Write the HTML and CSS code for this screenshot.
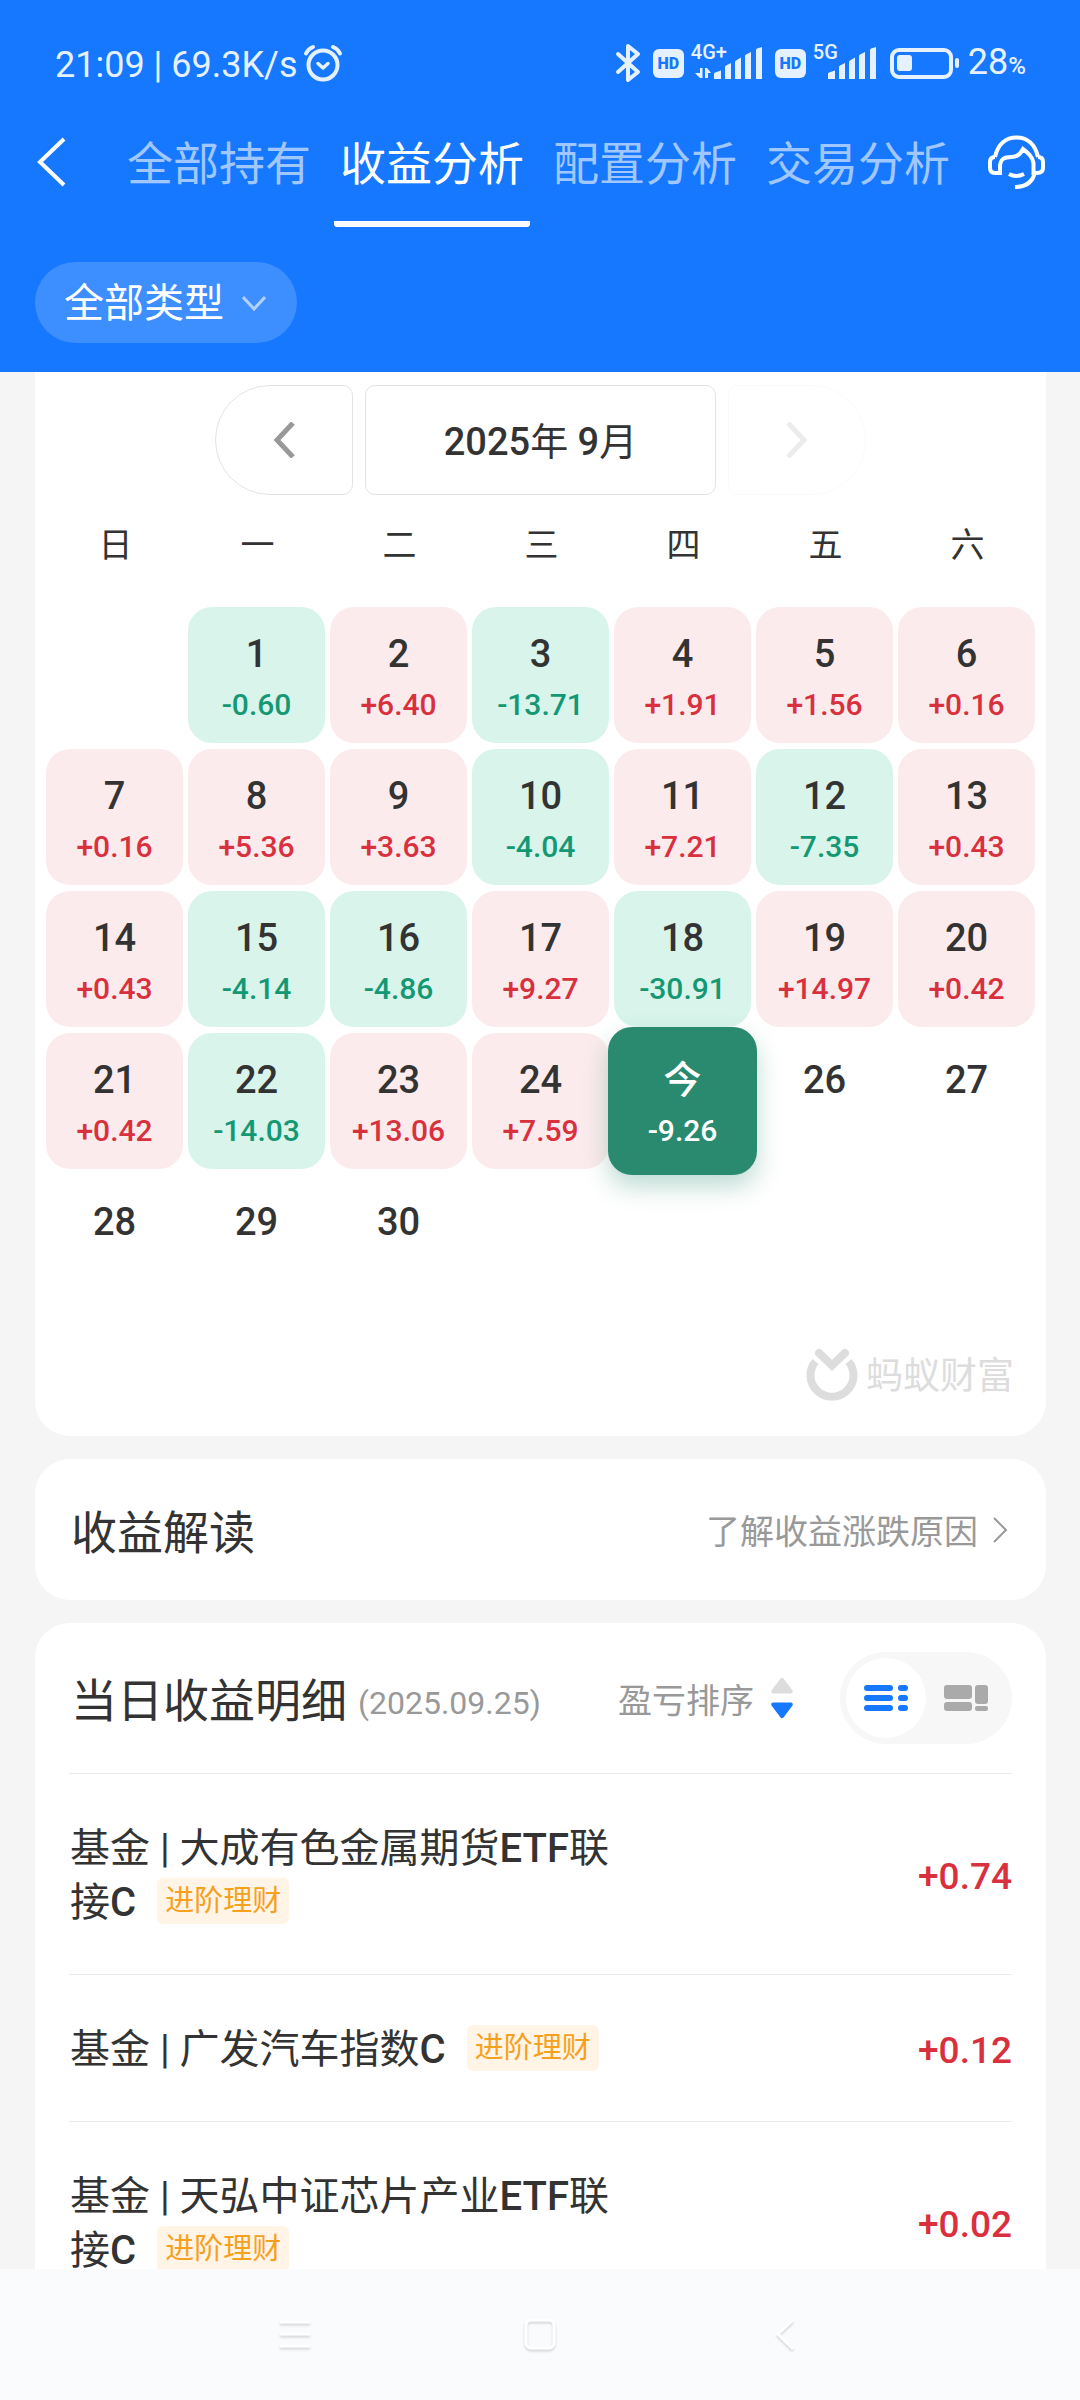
FILE: index.html
```html
<!DOCTYPE html>
<html lang="zh-CN">
<head>
<meta charset="utf-8">
<meta name="viewport" content="width=device-width, initial-scale=1">
<title>收益分析</title>
<link rel="stylesheet" href="styles.css">
</head>
<body>
<header class="header">
  <div class="status">
    <div class="status-side">
      <span class="clock">21:09 | 69.3K/s</span>
      <svg class="alarm" width="40" height="38" viewBox="0 0 40 38" fill="none" stroke="currentColor" stroke-width="4" stroke-linecap="round" stroke-linejoin="round"><circle cx="20" cy="21" r="14.5"/><path d="M3 9.500Q5 5 10 3M37 9.500Q35 5 30 3"/><path d="M15 19.500l5 4.500 5-4.500" stroke-width="3.500"/></svg>
    </div>
    <div class="status-side status-right">
      <svg width="26" height="40" viewBox="0 0 26 40" fill="none" stroke="currentColor" stroke-width="4" stroke-linejoin="round" stroke-linecap="round"><path d="M3 11l20 18-10 8V3l10 8L3 29"/></svg>
      <span class="hd">HD</span>
      <span class="signal signal-4g">
        <span class="net">4G+</span>
        <svg width="68" height="32" viewBox="0 0 68 32" fill="currentColor"><path d="M5 21h2.500v10H5L0 26h5zM10 31V21h2l4 5h-3v5z"/><path d="M19 32v-5q0-1 1-1.500l6-2V32zM30 32V20q0-1 1-1.500l5-2.500V32zM40 32V15q0-1 1-1.500l5-3V32zM50 32V9q0-1 1-1.500l5-2.500V32zM61 32V3q0-1 1-1.500L67 0V32z"/></svg>
      </span>
      <span class="hd">HD</span>
      <span class="signal signal-5g">
        <span class="net">5G</span>
        <svg width="68" height="32" viewBox="0 0 68 32" fill="currentColor"><path d="M19 32v-5q0-1 1-1.500l6-2V32zM30 32V20q0-1 1-1.500l5-2.500V32zM40 32V15q0-1 1-1.500l5-3V32zM50 32V9q0-1 1-1.500l5-2.500V32zM61 32V3q0-1 1-1.500L67 0V32z"/></svg>
      </span>
      <svg class="battery" width="70" height="32" viewBox="0 0 70 32"><rect x="2" y="3" width="59" height="27" rx="7" fill="none" stroke="currentColor" stroke-width="4"/><rect x="7" y="8" width="15" height="16" rx="3" fill="currentColor"/><rect x="65" y="11" width="4" height="10" rx="2" fill="currentColor"/></svg>
      <span class="percent">28<small>%</small></span>
    </div>
  </div>
  <div class="topbar">
    <button class="icon-button back" aria-label="返回"><svg width="30" height="50" viewBox="0 0 30 50" fill="none" stroke="currentColor" stroke-width="4"><path d="M28 2L4 25l24 23"/></svg></button>
    <nav class="tabs">
      <a class="tab" href="#holding">全部持有</a>
      <a class="tab active" href="#profit" aria-current="page">收益分析</a>
      <a class="tab" href="#allocation">配置分析</a>
      <a class="tab" href="#trade">交易分析</a>
    </nav>
    <button class="icon-button" aria-label="客服"><svg width="57" height="54" viewBox="0 0 57 54" fill="none" stroke="currentColor" stroke-width="4"><path d="M7 22C10 9 18 2.500 28.500 2.500S47 9 50 22"/><path d="M7 22q-5 0-5 5v6q0 5 5 5h5v-6c0-8 4-10 12-10 5 0 8-2 11-8 5 4 9 7 10.500 14V38h3.500q6 0 6-5v-6q0-5-5-5"/><path d="M47 37c-2 9-8 15-20 15M21 39q7 4 15 0"/></svg></button>
  </div>
  <div class="filter">
    <button class="type-button">全部类型<svg width="24" height="18" viewBox="0 0 24 18" fill="none" stroke="currentColor" stroke-width="3"><path d="M1 2l11 12L23 2"/></svg></button>
  </div>
</header>

<main class="content">
  <section class="card calendar-card">
    <div class="month-nav">
      <button class="month-box prev" aria-label="上个月"><svg width="24" height="36" viewBox="0 0 24 36" fill="none" stroke="currentColor" stroke-width="5"><path d="M21 1L5 18l16 17"/></svg></button>
      <button class="month-box month"><b>2025</b>年 <b>9</b>月</button>
      <button class="month-box next" aria-label="下个月" disabled><svg width="24" height="36" viewBox="0 0 24 36" fill="none" stroke="currentColor" stroke-width="5"><path d="M3 1l16 17L3 35"/></svg></button>
    </div>
    <table class="calendar">
      <thead>
        <tr><th>日</th><th>一</th><th>二</th><th>三</th><th>四</th><th>五</th><th>六</th></tr>
      </thead>
      <tbody>
        <tr>
          <td></td>
          <td><button class="day loss">1<span>-0.60</span></button></td>
          <td><button class="day gain">2<span>+6.40</span></button></td>
          <td><button class="day loss">3<span>-13.71</span></button></td>
          <td><button class="day gain">4<span>+1.91</span></button></td>
          <td><button class="day gain">5<span>+1.56</span></button></td>
          <td><button class="day gain">6<span>+0.16</span></button></td>
        </tr>
        <tr>
          <td><button class="day gain">7<span>+0.16</span></button></td>
          <td><button class="day gain">8<span>+5.36</span></button></td>
          <td><button class="day gain">9<span>+3.63</span></button></td>
          <td><button class="day loss">10<span>-4.04</span></button></td>
          <td><button class="day gain">11<span>+7.21</span></button></td>
          <td><button class="day loss">12<span>-7.35</span></button></td>
          <td><button class="day gain">13<span>+0.43</span></button></td>
        </tr>
        <tr>
          <td><button class="day gain">14<span>+0.43</span></button></td>
          <td><button class="day loss">15<span>-4.14</span></button></td>
          <td><button class="day loss">16<span>-4.86</span></button></td>
          <td><button class="day gain">17<span>+9.27</span></button></td>
          <td><button class="day loss">18<span>-30.91</span></button></td>
          <td><button class="day gain">19<span>+14.97</span></button></td>
          <td><button class="day gain">20<span>+0.42</span></button></td>
        </tr>
        <tr>
          <td><button class="day gain">21<span>+0.42</span></button></td>
          <td><button class="day loss">22<span>-14.03</span></button></td>
          <td><button class="day gain">23<span>+13.06</span></button></td>
          <td><button class="day gain">24<span>+7.59</span></button></td>
          <td><button class="day today" aria-current="date">今<span>-9.26</span></button></td>
          <td><button class="day">26</button></td>
          <td><button class="day">27</button></td>
        </tr>
        <tr>
          <td><button class="day">28</button></td>
          <td><button class="day">29</button></td>
          <td><button class="day">30</button></td>
          <td></td><td></td><td></td><td></td>
        </tr>
      </tbody>
    </table>
    <div class="brand">
      <svg width="52" height="54" viewBox="0 0 52 54" fill="none" stroke="currentColor" stroke-width="8"><path d="M9.500 13.500A21.500 21.500 0 1 0 42.500 13.500"/><path d="M13 5l13 12.500L39 5" stroke-width="8" stroke-linecap="round"/></svg>
      <span>蚂蚁财富</span>
    </div>
  </section>

  <section class="card insight">
    <h2>收益解读</h2>
    <a class="more" href="#reason">了解收益涨跌原因<svg width="16" height="26" viewBox="0 0 16 26" fill="none" stroke="currentColor" stroke-width="2"><path d="M2 1l12 12L2 25"/></svg></a>
  </section>

  <section class="card detail">
    <div class="detail-head">
      <h2>当日收益明细</h2>
      <span class="date">(2025.09.25)</span>
      <button class="sort">盈亏排序<svg width="24" height="42" viewBox="0 0 24 42"><path d="M10.500 1.500q1.500-1.500 3 0l9 12q1 3-2 3h-17q-3 0-2-3z" fill="#ddd"/><path d="M10.500 40.500q1.500 1.500 3 0l9-12q1-3-2-3h-17q-3 0-2 3z" fill="#1677ff"/></svg></button>
      <div class="view-switch">
        <button class="view on" aria-label="列表"><svg width="44" height="28" viewBox="0 0 44 28" stroke="currentColor" stroke-width="6" stroke-linecap="round"><path d="M3 4h23M37 4h4M3 14h23M37 14h4M3 24h23M37 24h4"/></svg></button>
        <button class="view" aria-label="色块"><svg width="44" height="28" viewBox="0 0 44 28" fill="currentColor"><rect y="1" width="28" height="14" rx="3"/><rect y="18" width="28" height="9" rx="3"/><rect x="31" y="1" width="13" height="19" rx="3"/><rect x="31" y="22" width="13" height="5" rx="2"/></svg></button>
      </div>
    </div>
    <ul class="funds">
      <li>
        <p class="name">基金 | 大成有色金属期货<b>ETF</b>联接<b>C</b><span class="tag">进阶理财</span></p>
        <span class="amount">+0.74</span>
      </li>
      <li>
        <p class="name">基金 | 广发汽车指数<b>C</b><span class="tag">进阶理财</span></p>
        <span class="amount">+0.12</span>
      </li>
      <li>
        <p class="name">基金 | 天弘中证芯片产业<b>ETF</b>联接<b>C</b><span class="tag">进阶理财</span></p>
        <span class="amount">+0.02</span>
      </li>
    </ul>
  </section>
</main>

<nav class="system-nav">
  <button class="icon-button" aria-label="菜单"><svg width="36" height="36" viewBox="0 0 36 36" fill="none" stroke="currentColor" stroke-width="3"><path d="M3 5h30M3 17h30M3 29h30"/></svg></button>
  <button class="icon-button" aria-label="主页"><svg width="36" height="36" viewBox="0 0 36 36" fill="none" stroke="currentColor" stroke-width="3"><rect x="4" y="3" width="28" height="28" rx="5"/></svg></button>
  <button class="icon-button" aria-label="后退"><svg width="36" height="36" viewBox="0 0 36 36" fill="none" stroke="currentColor" stroke-width="3"><path d="M26 3L11 17l15 15"/></svg></button>
</nav>
</body>
</html>
```
FILE: styles.css
```css
* {
  box-sizing: border-box;
}

body {
  margin: 0;
  height: 100vh;
  display: flex;
  flex-direction: column;
  background: #f5f5f5;
  color: #333;
  font-family: Roboto, "Noto Sans CJK SC", sans-serif;
}

button {
  margin: 0;
  padding: 0;
  border: 0;
  background: none;
  color: inherit;
  font: inherit;
}

a {
  color: inherit;
  text-decoration: none;
}

svg {
  display: block;
  flex: none;
}

h2,
p,
ul {
  margin: 0;
  padding: 0;
}

h2 {
  padding-top: 6px;
  font-size: 46px;
  line-height: 60px;
  font-weight: 400;
}

b {
  font-weight: 500;
}

.icon-button {
  display: flex;
  justify-content: center;
}

/* Header */
.header {
  flex: none;
  background: #1677ff;
  color: #fff;
}

.status {
  display: flex;
  justify-content: space-between;
  padding: 40px 54px 0 55px;
  color: #e6f1ff;
}

.status-side {
  display: flex;
  align-items: center;
  height: 46px;
}

.clock {
  padding-top: 3px;
  font-size: 36px;
  line-height: 46px;
}

.alarm {
  margin-left: 5px;
}

.hd {
  width: 31px;
  height: 29px;
  border-radius: 6px;
  background: #e6f1ff;
  color: #1677ff;
  font-size: 16px;
  line-height: 29px;
  font-weight: 900;
  text-align: center;
}

.status-right .hd {
  margin-left: 12px;
}

.signal {
  position: relative;
  margin-left: 11px;
}

.signal-5g {
  margin-left: 3px;
}

.net {
  position: absolute;
  left: -4px;
  top: -7px;
  font-size: 20px;
  line-height: 24px;
  font-weight: 500;
}

.signal-5g .net {
  left: 4px;
}

.battery {
  margin-left: 13px;
}

.percent {
  margin-left: 8px;
  padding-top: 2px;
  font-size: 36px;
  line-height: 46px;
}

.percent small {
  font-size: 24px;
  font-weight: 500;
}

.topbar {
  display: flex;
  padding: 43px 35px 0 36px;
  height: 141px;
}

.topbar > .icon-button {
  align-items: center;
  height: 66px;
}

.tabs {
  display: flex;
  gap: 17px;
  margin-left: auto;
  margin-right: 32px;
}

.tab {
  padding: 0 6px;
  height: 98px;
  font-size: 46px;
  line-height: 71px;
  white-space: nowrap;
  color: rgba(255, 255, 255, 0.6);
}

.tab.active {
  color: #fff;
  border-bottom: 6px solid #fff;
  border-radius: 3px;
}

.filter {
  padding: 35px 35px 29px;
}

.type-button {
  display: flex;
  align-items: center;
  gap: 18px;
  padding: 3px 31px 0 29px;
  height: 81px;
  border-radius: 41px;
  background: rgba(255, 255, 255, 0.17);
  font-size: 40px;
  line-height: 60px;
}

.type-button svg {
  opacity: 0.6;
}

/* Scrolling content */
.content {
  flex: 1;
  min-height: 0;
  overflow: hidden;
  padding: 0 34px 0 35px;
}

.card {
  margin-bottom: 23px;
  border-radius: 35px;
  background: #fff;
}

.calendar-card {
  padding: 13px 6px 34px;
  border-radius: 0 0 35px 35px;
}

.month-nav {
  display: flex;
  justify-content: center;
  gap: 12px;
}

.month-box {
  display: flex;
  justify-content: center;
  align-items: center;
  width: 138px;
  height: 110px;
  border: 1px solid #e3e3e3;
  border-radius: 10px;
  color: #999;
}

.prev {
  border-radius: 55px 10px 10px 55px;
}

.month {
  display: block;
  width: 351px;
  padding-top: 3px;
  color: #333;
  font-size: 38px;
  line-height: 104px;
}

.next {
  border-radius: 10px 55px 55px 10px;
  opacity: 0.18;
}

.calendar {
  width: 100%;
  table-layout: fixed;
  border-collapse: separate;
  border-spacing: 5px 6px;
}

.calendar th {
  height: 100px;
  padding: 0 0 17px 2px;
  font-size: 34px;
  font-weight: 400;
}

.calendar td {
  padding: 0;
}

.day {
  display: flex;
  flex-direction: column;
  align-items: center;
  gap: 10px;
  width: 100%;
  height: 136px;
  padding-top: 24px;
  border-radius: 24px;
  font-size: 38px;
  line-height: 46px;
  font-weight: 500;
}

.day span {
  font-size: 30px;
  line-height: 36px;
}

.gain {
  background: #fbebec;
}

.loss {
  background: #d8f4eb;
}

.gain span,
.amount {
  color: #d9303e;
}

.loss span {
  color: #149873;
}

.today {
  position: relative;
  width: calc(100% + 12px);
  height: 148px;
  margin: -6px;
  padding-top: 30px;
  background: #2a8a70;
  color: #fff;
  box-shadow: 0 12px 24px rgba(42, 138, 112, 0.3);
}

.brand {
  display: flex;
  justify-content: flex-end;
  align-items: center;
  gap: 8px;
  margin-top: 31px;
  padding-right: 26px;
  color: #ddd;
  font-size: 37px;
  line-height: 50px;
}

.brand span {
  padding-top: 4px;
}

.insight {
  display: flex;
  justify-content: space-between;
  align-items: center;
  height: 141px;
  padding: 0 38px 0 36px;
}

.more {
  display: flex;
  align-items: center;
  gap: 14px;
  color: #999;
  font-size: 34px;
}

.detail {
  padding: 0 34px;
}

.detail-head {
  display: flex;
  align-items: center;
  height: 151px;
  padding: 0 0 0 2px;
  border-bottom: 1px solid #ebebeb;
}

.date {
  margin: 10px 0 0 11px;
  color: #999;
  font-size: 32px;
}

.sort {
  display: flex;
  align-items: center;
  gap: 16px;
  margin-left: auto;
  color: #999;
  font-size: 34px;
}

.view-switch {
  display: flex;
  margin-left: 46px;
  padding: 6px;
  border-radius: 46px;
  background: #f7f7f7;
}

.view {
  display: flex;
  justify-content: center;
  align-items: center;
  width: 80px;
  height: 80px;
  border-radius: 40px;
  color: #aaa;
}

.view.on {
  background: #fff;
  color: #1677ff;
}

.funds {
  list-style: none;
}

.funds li {
  display: flex;
  justify-content: space-between;
  align-items: center;
  padding: 48px 0 44px 1px;
  border-bottom: 1px solid #ebebeb;
}

.name {
  width: 60%;
  font-size: 40px;
  line-height: 54px;
}

.tag {
  display: inline-block;
  margin-top: -8px;
  margin-left: 21px;
  padding: 0 8px;
  border-radius: 6px;
  background: #fff4e5;
  color: #f5a11e;
  font-size: 29px;
  line-height: 46px;
  vertical-align: middle;
}

.amount {
  font-size: 37px;
  font-weight: 500;
}

/* System navigation */
.system-nav {
  flex: none;
  display: grid;
  grid-template-columns: repeat(3, 1fr);
  align-items: center;
  height: 131px;
  padding: 0 16%;
  background: #fafbfd;
  color: #fff;
}

.system-nav svg {
  filter: drop-shadow(0 2px 1px rgba(0, 0, 0, 0.15));
}
```
